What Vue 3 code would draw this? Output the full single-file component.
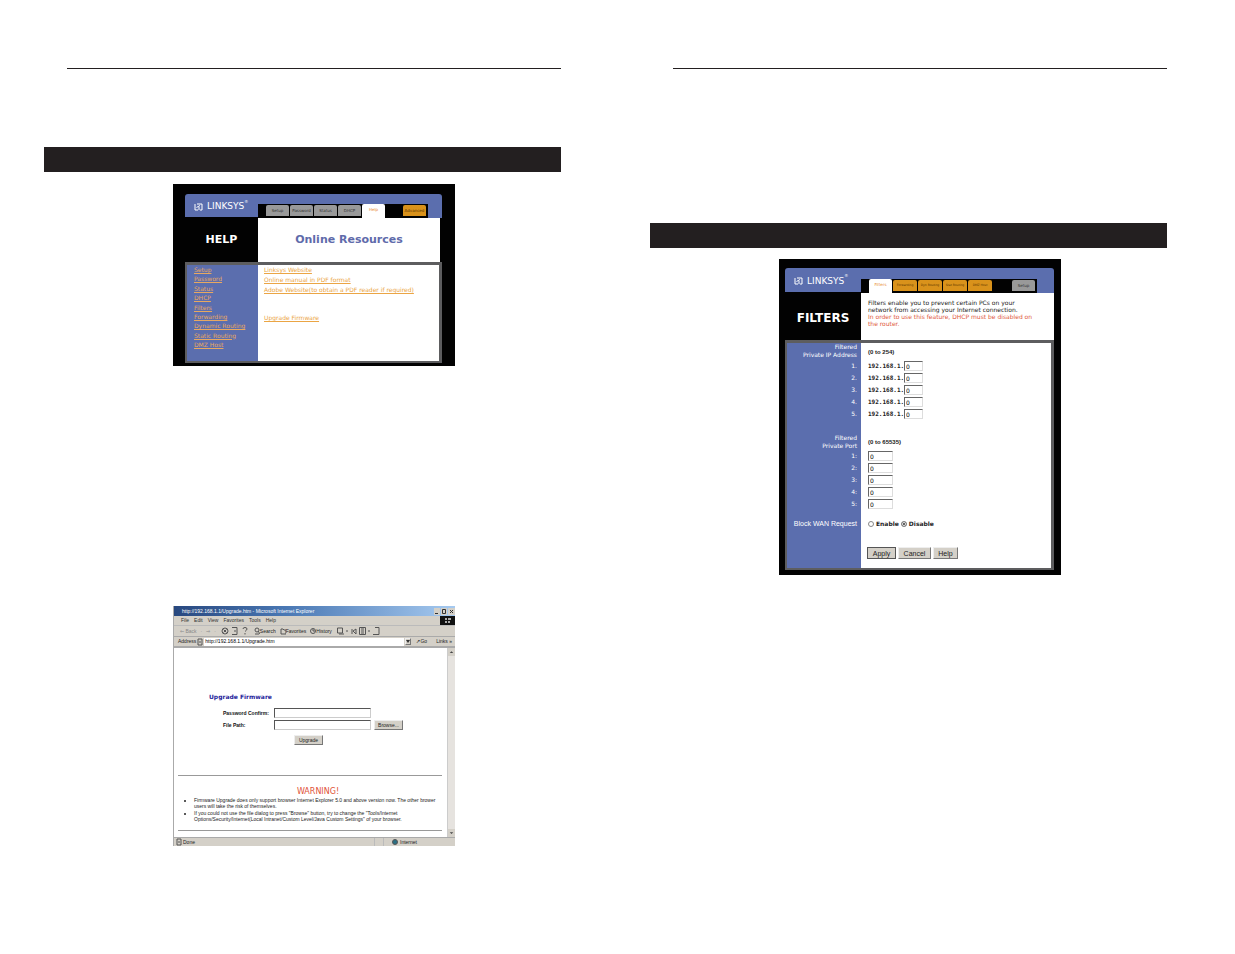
<script setup>
import { ref } from 'vue'

const helpTabs = ['Setup', 'Password', 'Status', 'DHCP']
const helpLinks = ['Setup', 'Password', 'Status', 'DHCP', 'Filters', 'Forwarding', 'Dynamic Routing', 'Static Routing', 'DMZ Host']
const filterTabs = ['Forwarding', 'Dyn Routing', 'Stat Routing', 'DMZ Host']
const addresses = ref(['0', '0', '0', '0', '0'])
const ports = ref(['0', '0', '0', '0', '0'])
const block = ref('disable')
const menus = ['File', 'Edit', 'View', 'Favorites', 'Tools', 'Help']
</script>

<template>
  <main class="spread">
    <section class="sheet">
      <hr class="rule" />
      <div class="band"></div>

      <article class="panel help">
        <div class="brand">
          <svg class="mark" viewBox="0 0 9 8"><path d="M1 1v6h3M3 1h5v6H6M2.500 4.500L6 2.500M5 4v3" /></svg>
          <span class="word">L<small>INKSYS</small></span><sup>®</sup>
        </div>
        <nav class="top">
          <div class="tabs">
            <a v-for="t in helpTabs" :key="t" href="#" class="tab grey">{{ t }}</a>
            <a href="#" class="tab on">Help</a>
            <a href="#" class="tab amber apart">Advanced</a>
          </div>
        </nav>
        <h2 class="name">HELP</h2>
        <div class="head"><h3>Online Resources</h3></div>
        <div class="body">
          <nav class="side">
            <a v-for="l in helpLinks" :key="l" href="#">{{ l }}</a>
          </nav>
          <div class="resources">
            <a href="#">Linksys Website</a>
            <a href="#">Online manual in PDF format</a>
            <a href="#">Adobe Website(to obtain a PDF reader if required)</a>
            <a href="#" class="later">Upgrade Firmware</a>
          </div>
        </div>
      </article>

      <article class="browser">
        <header class="title">
          <span>http://192.168.1.1/Upgrade.htm - Microsoft Internet Explorer</span>
          <svg class="winbtns" viewBox="0 0 21 9">
            <path class="face" d="M0 1h6v7H0zM7 1h6v7H7zM14 1h7v7h-7z" />
            <path class="ink" d="M1 6.500h3M8.500 2.500h3v4h-3zM16 3l3 3M19 3l-3 3" />
          </svg>
        </header>
        <nav class="menu">
          <a v-for="m in menus" :key="m" href="#">{{ m }}</a>
          <svg class="flag" viewBox="0 0 15 9"><path class="dark" d="M0 0h15v9H0z" /><path class="lite" d="M5 2h2v2H5zM8 2h3v2H8zM5 5h2v2H5zM8 5h2v2H8z" /></svg>
        </nav>
        <div class="tools">
          <span class="faint">⇐ Back</span><span class="faint">·</span><span class="faint">⇒</span><span class="faint">·</span>
          <svg viewBox="0 0 30 10">
            <circle cx="5" cy="5" r="3" /><path d="M3.500 3.500l3 3M6.500 3.500l-3 3M12 1.500h5v7h-5M14 5h2M23 3q0-1.500 2-1.500t2 1.500q0 1-2 2.500M25 7v1.500" />
          </svg>
          <span class="item"><svg class="small" viewBox="0 0 6 8"><circle cx="3" cy="3" r="2" /><path d="M1 7h4M4 4l2 3" /></svg>Search</span>
          <span class="item"><svg class="small" viewBox="0 0 6 8"><path d="M1 2h2l1 1h2v4H1z" /></svg>Favorites</span>
          <span class="item"><svg class="small" viewBox="0 0 6 8"><circle cx="3" cy="4" r="2.500" /><path d="M3 2v2h2" /></svg>History</span>
          <svg class="wide" viewBox="0 0 46 10">
            <path d="M1.500 2h5v5h-5zM3 8h5M10 5h2M16 3v5M17 5l3-2v5zM23.500 1.500h6v7h-6zM25 3h3M25 5h3M25 7h3M32 5h2M37 8.500h6v-7h-4" />
          </svg>
        </div>
        <div class="address">
          <label for="url">Address</label>
          <svg class="small" viewBox="0 0 6 8"><path d="M1 1h4v6H1zM2 4h2" /></svg>
          <input id="url" value="http://192.168.1.1/Upgrade.htm" />
          <button class="drop" aria-label="Show addresses"><svg viewBox="0 0 4 3"><path d="M0 0h4l-2 3z" /></svg></button>
          <span class="go">↗Go</span><span>Links »</span>
        </div>
        <div class="view">
          <div class="doc">
            <h3>Upgrade Firmware</h3>
            <div class="form">
              <label for="pw">Password Confirm:</label><input id="pw" type="password" /><span></span>
              <label for="path">File Path:</label><input id="path" /><button>Browse...</button>
            </div>
            <button class="send">Upgrade</button>
            <hr />
            <h4>WARNING!</h4>
            <ul>
              <li>Firmware Upgrade does only support browser Internet Explorer 5.0 and above version now. The other brower<br />users will take the risk of themselves.</li>
              <li>If you could not use the file dialog to press "Browse" button, try to change the "Tools/Internet<br />Options/Security/Internet(Local Intranet/Custom Level/Java Custom Settings" of your browser.</li>
            </ul>
            <hr />
          </div>
          <div class="scroll">
            <svg viewBox="0 0 8 8"><path d="M2 5h4L4 3z" /></svg>
            <svg viewBox="0 0 8 8"><path d="M2 3h4L4 5z" /></svg>
          </div>
        </div>
        <footer class="status">
          <span class="done"><svg class="small" viewBox="0 0 6 8"><path d="M1 1h4v6H1zM2 4h2" /></svg>Done</span>
          <span class="slot"></span>
          <span class="zone"><svg class="small" viewBox="0 0 6 8"><circle class="globe" cx="3" cy="4" r="2.500" /></svg>Internet</span>
        </footer>
      </article>
    </section>

    <section class="sheet">
      <hr class="rule" />
      <div class="band low"></div>

      <article class="panel filters">
        <div class="brand">
          <svg class="mark" viewBox="0 0 9 8"><path d="M1 1v6h3M3 1h5v6H6M2.500 4.500L6 2.500M5 4v3" /></svg>
          <span class="word">L<small>INKSYS</small></span><sup>®</sup>
        </div>
        <nav class="top">
          <div class="tabs">
            <a href="#" class="tab on">Filters</a>
            <a v-for="t in filterTabs" :key="t" href="#" class="tab amber">{{ t }}</a>
            <a href="#" class="tab grey apart">Setup</a>
          </div>
        </nav>
        <h2 class="name">FILTERS</h2>
        <div class="head intro">
          <p>Filters enable you to prevent certain PCs on your<br />network from accessing your Internet connection.<br /><em>In order to use this feature, DHCP must be disabled on<br />the router.</em></p>
        </div>
        <form class="body rows" @submit.prevent>
          <div class="row first"><span class="lab">Filtered<br />Private IP Address</span><b>(0 to 254)</b></div>
          <div v-for="(a, i) in addresses" :key="'a' + i" class="row">
            <label class="lab" :for="'ip' + i">{{ i + 1 }}.</label>
            <div class="cell"><code>192.168.1.</code><input :id="'ip' + i" v-model="addresses[i]" class="ip" /></div>
          </div>
          <div class="row gap"><span class="lab"></span></div>
          <div class="row second"><span class="lab">Filtered<br />Private Port</span><b>(0 to 65535)</b></div>
          <div v-for="(p, i) in ports" :key="'p' + i" class="row">
            <label class="lab" :for="'port' + i">{{ i + 1 }}:</label>
            <div class="cell"><input :id="'port' + i" v-model="ports[i]" class="port" /></div>
          </div>
          <div class="row block">
            <span class="lab">Block WAN Request</span>
            <div class="cell choice">
              <input id="en" v-model="block" type="radio" name="wan" value="enable" /><label for="en">Enable</label>
              <input id="dis" v-model="block" type="radio" name="wan" value="disable" /><label for="dis">Disable</label>
            </div>
          </div>
          <div class="row actions">
            <span class="lab"></span>
            <div class="cell buttons"><button class="main">Apply</button><button class="cancel">Cancel</button><button>Help</button></div>
          </div>
        </form>
      </article>
    </section>
  </main>
</template>

<style>
body { margin: 0; background: #fff; }
</style>

<style scoped>
* { box-sizing: border-box; }
h2, h3, h4, p, ul, hr { margin: 0; padding: 0; }
button, input { font: inherit; margin: 0; padding: 0; border-radius: 0; min-width: 0; }
svg { display: block; fill: none; stroke: #555; stroke-width: 1; flex: none; }
.spread {
  display: grid; grid-template-columns: 1fr 1fr; column-gap: 89px;
  padding: 68px 68px 0 44px; min-height: 100vh;
  font: 6px/9px "DejaVu Sans", sans-serif; color: #222;
}
.rule { border: 0; border-top: 1px solid #231f20; margin-left: 23px; }
.band { height: 25px; margin-top: 78px; background: #231f20; }
.band.low { margin-top: 154px; }
.sheet { display: flex; flex-direction: column; }
.panel, .browser { width: 282px; align-self: center; margin-left: 23px; }

/* router pages */
.panel { display: grid; background: #020202; }
.help { grid-template: 24px 44px auto / 73px 1fr; margin-top: 12px; padding: 10px 13px 3px 12px; }
.filters { grid-template: 25px 47px auto / 76px 1fr; margin-top: 11px; padding: 9px 7px 5px 6px; }
.brand { background: #5b6eae; color: #fff; display: flex; align-items: center; padding: 2px 0 0 9px; border-radius: 3px 0 0 0; border-bottom: 1px solid #020202; }
.mark { width: 9px; height: 8px; stroke: #fff; margin-right: 4px; }
.word { font-size: 9px; }
.word small { font-size: 9px; }
sup { font-size: 4px; align-self: flex-start; line-height: 12px; }
.top { background: #5b6eae; display: flex; align-items: flex-end; border-radius: 0 3px 0 0; }
.tabs { background: #020202; height: 14px; display: flex; align-items: flex-end; gap: 1px; padding: 0 2px 0 8px; }
.tab { width: 23px; height: 11px; margin-bottom: 2px; border-radius: 2px 2px 0 0; font-size: 4px; line-height: 11px; text-align: center; text-decoration: none; overflow: hidden; color: #333; white-space: nowrap; }
.grey { background: #999; }
.amber { background: #d9921b; color: #5c3500; }
.on { background: #fff; color: #e8862b; height: 14px; margin-bottom: 0; }
.apart { margin-left: 17px; }
.filters .apart { margin-left: 19px; }
.filters .amber { width: 24px; font-size: 3px; }
.name { color: #fff; font-size: 11px; line-height: 44px; text-align: center; }
.filters .name { font-size: 12px; line-height: 50px; }
.head { background: #fff; margin-right: 2px; display: flex; justify-content: center; }
.head h3 { color: #5f6bab; font-size: 11px; line-height: 44px; }
.filters .head { margin-right: 0; }
.intro { justify-content: flex-start; padding: 6px 0 0 7px; line-height: 7px; white-space: nowrap; }
.intro em { font-style: normal; color: #e0583c; }
.body { grid-column: 1 / 3; border: solid #5d5d5f; border-width: 3px 3px 2px 2px; background: #fff; }
.help .body { display: grid; grid-template-columns: 71px 1fr; height: 101px; }
.side { background: #5b6eae; display: flex; flex-direction: column; justify-content: space-between; padding: 0 0 12px 7px; }
.side a, .resources a { color: #e8a860; white-space: nowrap; width: max-content; }
.resources { display: flex; flex-direction: column; gap: 1px; padding-left: 6px; }
.resources a { color: #eba544; }
.resources .later { margin-top: 18px; }
.row { display: grid; grid-template-columns: 74px 1fr; height: 12px; align-items: center; }
.lab { background: #5b6eae; color: #fff; align-self: stretch; text-align: right; padding-right: 4px; line-height: 12px; white-space: nowrap; }
.row b { font: bold 6px/8px "Liberation Sans", sans-serif; padding-left: 7px; }
.row.first { height: 17px; }
.row.second { height: 16px; }
.first .lab, .second .lab { line-height: 8px; }
.row.gap { height: 14px; }
.row.block { height: 28px; }
.row.actions { height: 30px; }
.block .lab { font: 7px/28px "Liberation Sans", sans-serif; }
.cell { display: flex; align-items: center; padding-left: 7px; }
code { font: bold 6px/10px "DejaVu Sans Mono", monospace; width: 36px; }
.cell input:not([type]) { height: 10px; border: 1px solid; border-color: #666 #ddd #ddd #666; background: #fff; font-size: 6px; line-height: 8px; padding-left: 1px; }
.cell .ip { width: 19px; }
.cell .port { width: 25px; }
.choice { font: bold 6px/8px "DejaVu Sans", sans-serif; gap: 2px; }
.choice input { appearance: none; width: 6px; height: 6px; border: 1px solid #888; border-radius: 50%; background: #fff; }
.choice input:checked { background: #333; box-shadow: inset 0 0 0 1px #fff; }
.choice label { font-size: 6px; }
button { background: #d4d0c8; border: 1px solid; border-color: #eee #777 #777 #eee; color: #222; }
.buttons { gap: 2px; padding-left: 6px; }
.buttons button { height: 12px; width: 25px; font: 7px/9px "Liberation Sans", sans-serif; }
.buttons .main { width: 29px; border-color: #555; }
.buttons .cancel { width: 33px; }

/* browser window */
.browser { margin-top: 240px; background: #d4d0c8; font: 5px/9px "Liberation Sans", sans-serif; border-left: 1px solid #aaa; }
.title { height: 10px; display: flex; align-items: center; justify-content: space-between; padding-left: 8px; color: #fff; background: linear-gradient(90deg, #28487f, #4a78b4 40%, #a6caf0); white-space: nowrap; }
.winbtns { width: 21px; height: 9px; }
.face { fill: #d4d0c8; stroke: none; }
.ink { stroke: #333; }
.menu { height: 10px; display: flex; align-items: center; gap: 5px; padding-left: 7px; border-bottom: 1px solid #bbb; }
.menu a { color: #333; text-decoration: none; }
.flag { width: 15px; height: 9px; margin-left: auto; stroke: none; }
.dark { fill: #111; }
.lite { fill: #aaa; }
.tools { height: 11px; display: flex; align-items: center; gap: 4px; padding-left: 6px; border-bottom: 1px solid #aaa; white-space: nowrap; }
.tools > svg { width: 30px; height: 10px; }
.tools > .wide { width: 46px; }
.faint { color: #888; }
.item { display: flex; align-items: center; }
.small { width: 6px; height: 8px; }
.address { height: 9px; display: flex; align-items: center; gap: 1px; padding: 0 3px 0 4px; white-space: nowrap; }
.address input { flex: 1; height: 8px; border: 0; background: #fff; padding-left: 1px; font-size: 5px; }
.drop { width: 6px; height: 7px; display: grid; place-items: center; }
.drop svg { width: 4px; height: 3px; fill: #333; stroke: none; }
.go { padding: 0 8px 0 4px; }
.view { display: flex; height: 191px; border-top: 2px solid #aaa; background: #fff; }
.doc { flex: 1; min-width: 0; padding: 44px 5px 0 4px; }
.doc h3 { font: bold 6px/9px "DejaVu Sans", sans-serif; color: #24249a; padding-left: 31px; }
.form { display: grid; grid-template-columns: 51px 97px 32px; column-gap: 0; row-gap: 2px; padding: 7px 0 0 45px; align-items: center; }
.form label { font: bold 5px/10px "Liberation Sans", sans-serif; color: #111; white-space: nowrap; }
.form input { height: 10px; border: 1px solid; border-color: #555 #ccc #ccc #555; background: #fff; }
.form button { margin-left: 3px; width: 29px; }
.form button, .send { height: 10px; font: 5px/8px "Liberation Sans", sans-serif; }
.send { display: block; width: 29px; margin: 5px 0 0 116px; }
.doc hr { border: 0; border-top: 1px solid #999; }
.send + hr { margin-top: 30px; }
h4 { font: 8px/10px "DejaVu Sans", sans-serif; color: #df5237; text-align: center; padding: 11px 0 0 16px; }
ul { font: 5px/6px "Liberation Sans", sans-serif; padding: 0 0 0 16px; white-space: nowrap; }
li { margin-bottom: 1px; }
ul + hr { margin-top: 8px; }
.scroll { width: 8px; background: #e6e3df; border-left: 1px solid #ccc; display: flex; flex-direction: column; justify-content: space-between; }
.scroll svg { width: 7px; height: 8px; fill: #444; stroke: none; background: #d4d0c8; }
.status { height: 9px; display: flex; border-top: 1px solid #aaa; line-height: 8px; }
.status span { display: flex; align-items: center; }
.done { flex: 1; padding-left: 2px; gap: 1px; }
.slot { width: 10px; border: solid #bbb; border-width: 0 1px; }
.zone { width: 71px; padding-left: 8px; gap: 2px; }
.globe { fill: #2b6f83; }
</style>
